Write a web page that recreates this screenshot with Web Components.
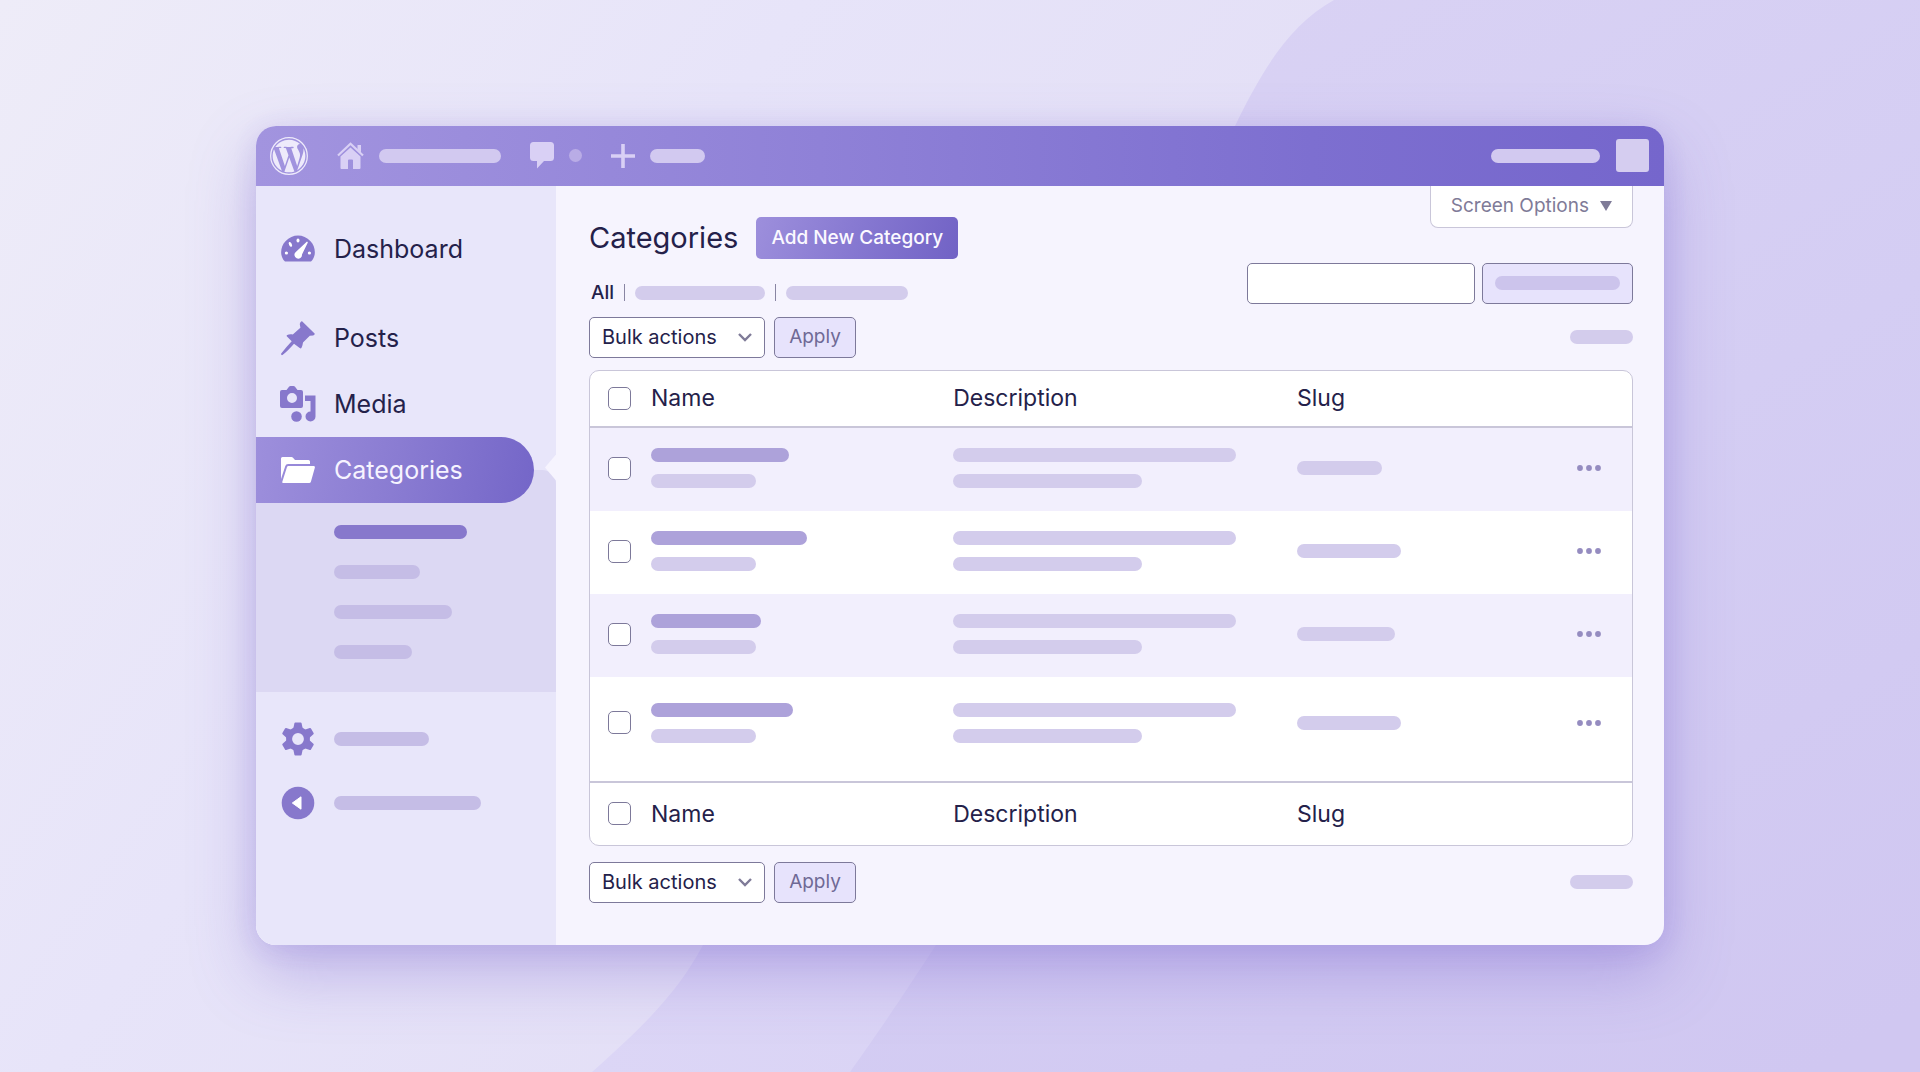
<!DOCTYPE html>
<html lang="en">
<head>
<meta charset="utf-8">
<meta name="viewport" content="width=device-width, initial-scale=1">
<title>Categories</title>
<style>
:root {
    --ink: #24214a;
    --muted: #7f7b98;
    --accent: #8778cc;
    --accent-light: #9d8fdc;
    --accent-dark: #7466c8;
    --border: #7d799a;
    --line: #c9c6d9;
    --bar: #d3ccec;
    --button-bg: #e7e3fc;
}

body {
    margin: 0;
    color: var(--ink);
    font-family: Inter, "Liberation Sans", sans-serif;
    font-size: 20px;
    line-height: 26px;
}
</style>
</head>
<body>
<page-backdrop></page-backdrop>
<admin-window>
  <admin-bar slot="bar"></admin-bar>
  <side-menu slot="menu">
    <menu-item icon="dashboard" spaced>Dashboard</menu-item>
    <menu-item icon="posts">Posts</menu-item>
    <menu-item icon="media">Media</menu-item>
    <menu-item icon="folder" current>Categories</menu-item>
    <sub-menu></sub-menu>
    <menu-item icon="settings" label="Settings" compact><skeleton-bar width="95" tone="soft"></skeleton-bar></menu-item>
    <menu-item icon="collapse" label="Collapse menu" compact><skeleton-bar width="147" tone="soft"></skeleton-bar></menu-item>
  </side-menu>
  <categories-screen></categories-screen>
</admin-window>

<script>
(function() {

  // name: [width, height, shapes]
  const ICONS = {
    logo: [38, 38, `
      <g transform="translate(19 19) scale(1.58)">
        <circle r="11.6" fill="none" stroke="currentColor" stroke-width=".8"/>
        <path transform="scale(.96) translate(-12 -12)" fill="currentColor" d="M21.469 6.825c.84 1.537 1.318 3.3 1.318 5.175 0 3.979-2.156 7.456-5.363 9.325l3.295-9.527c.615-1.54.82-2.771.82-3.864 0-.405-.026-.78-.07-1.11m-7.981.105c.647-.03 1.232-.105 1.232-.105.582-.075.514-.93-.067-.899 0 0-1.755.135-2.88.135-1.064 0-2.85-.15-2.85-.15-.585-.03-.661.855-.075.885 0 0 .54.061 1.125.09l1.68 4.605-2.37 7.08L5.354 6.9c.649-.03 1.234-.1 1.234-.1.585-.075.516-.93-.065-.896 0 0-1.746.138-2.874.138-.2 0-.438-.008-.69-.015C4.911 3.15 8.235 1.215 12 1.215c2.809 0 5.365 1.072 7.286 2.833-.046-.003-.091-.009-.141-.009-1.06 0-1.812.923-1.812 1.914 0 .89.513 1.643 1.06 2.531.411.72.89 1.643.89 2.977 0 .915-.354 1.994-.821 3.479l-1.075 3.585-3.9-11.61zM12 22.784c-1.059 0-2.081-.153-3.048-.437l3.237-9.406 3.315 9.087c.024.053.05.101.078.149-1.12.393-2.325.609-3.582.609M1.211 12c0-1.564.336-3.05.935-4.39L7.29 21.709C3.694 19.96 1.212 16.271 1.211 12"/>
      </g>`],
    home: [27, 27, `
      <path d="M1 13.5 13.5 1.8 26 13.5" fill="none" stroke="currentColor" stroke-width="2.2"/>
      <path fill="currentColor" d="M20.5 3H24v7.5l-3.5-3.3zM3.5 14.6 13.5 5.4l10 9.2V26a1 1 0 0 1-1 1H16v-8.5a1 1 0 0 0-1-1h-3a1 1 0 0 0-1 1V27H4.5a1 1 0 0 1-1-1z"/>`],
    comment: [24, 27, `
      <path fill="currentColor" d="M3.5 0h17A3.5 3.5 0 0 1 24 3.5v12a3.5 3.5 0 0 1-3.500 3.5H14l-7 7.5V19H3.5A3.5 3.5 0 0 1 0 15.5v-12A3.5 3.5 0 0 1 3.5 0z"/>`],
    plus: [24, 24, `<path d="M12 0v24M0 12h24" stroke="currentColor" stroke-width="3.6"/>`],
    dashboard: [34, 27, `
      <path fill="currentColor" d="M4 26.500C-1.600 21.500-.8 11.500 4.500 6.200 11.500-1.300 22.500-1.300 29.500 6.200 34.800 11.500 35.600 21.500 30 26.500z"/>
      <g fill="#fff">
        <circle cx="5.4" cy="18" r="1.6"/><circle cx="28.4" cy="18" r="1.6"/>
        <ellipse cx="17" cy="5.6" rx="1.5" ry="2"/>
        <ellipse cx="9.4" cy="9.4" rx="1.4" ry="2.6" transform="rotate(-26 9.4 9.4)"/>
        <path d="M26 6.5c.8.3 1 .9.6 1.600L21 19.600a3.800 3.800 0 1 1-6.200-2.700z"/>
      </g>`],
    posts: [34, 34, `
      <path fill="currentColor" d="M21.300.4 33.600 12.600c.6.700-.3 1.700-1.400 1.800l-3.400.4-6.800 6.800c-.3 1.800-.6 3.700-1.600 5.400-.5.600-1.200.5-1.700 0L13 22.700C9.500 26.800 5.600 30.700 1.500 34c-.8.500-1.800-.5-1.300-1.400C3.500 28.300 7 24.200 10.700 20.300L6 15.500c-.4-.5-.5-1.200.2-1.600 1.700-.8 3.600-.8 5.600-.5l7.600-6.600-.6-3.500c0-1.300 1.600-3.700 2.500-2.900z"/>`],
    media: [36, 36, `
      <path fill="currentColor" fill-rule="evenodd" d="M2 4h4.500L9 .8A2 2 0 0 1 10.500 0h3A2 2 0 0 1 15 .8L17.500 4H21a2 2 0 0 1 2 2v14a2 2 0 0 1-2 2H2a2 2 0 0 1-2-2V6a2 2 0 0 1 2-2zM12 7a5 5 0 1 0 0 10A5 5 0 0 0 12 7z"/>
      <circle cx="16.5" cy="30.5" r="5.3" fill="currentColor"/>
      <path fill="currentColor" d="M25 9.5h10.500v21a5 5 0 1 1-5-5V15H25z"/>`],
    folder: [34, 26, `
      <path fill="currentColor" d="M0 22V1.500A1.500 1.500 0 0 1 1.500 0h9a2 2 0 0 1 1.500.700l2 2.300h13.500A1.500 1.500 0 0 1 29 4.500V7H7a3 3 0 0 0-2.700 2z"/>
      <path fill="currentColor" d="M7.500 9h25.300a1.200 1.200 0 0 1 1.100 1.500l-4 14.300A1.800 1.800 0 0 1 28.200 26H2.300a1 1 0 0 1-1-1.300L6 10.100A1.600 1.600 0 0 1 7.500 9z"/>`],
    settings: [34, 34, `
      <g transform="translate(17 17)" fill="currentColor">
        <circle r="8.9" fill="none" stroke="currentColor" stroke-width="6"/>
        <path id="tooth" d="M-4.900-9.500-3.600-15.700a1 1 0 0 1 1-.8h5.200a1 1 0 0 1 1 .8L4.900-9.500z"/>
        <use href="#tooth" transform="rotate(60)"/><use href="#tooth" transform="rotate(120)"/>
        <use href="#tooth" transform="rotate(180)"/><use href="#tooth" transform="rotate(240)"/>
        <use href="#tooth" transform="rotate(300)"/>
      </g>`],
    collapse: [34, 34, `
      <circle cx="17" cy="17" r="16.3" fill="currentColor"/>
      <path d="M11.300 17 20 10.800v12.400z" fill="#fff" stroke="#fff" stroke-linejoin="round"/>`],
    chevron: [16, 10, `<path d="M2 2l6 6 6-6" fill="none" stroke="currentColor" stroke-width="2.4"/>`],
    triangle: [12, 10, `<path d="M0 0h12L6 10z" fill="currentColor"/>`],
    dots: [24, 6, `
      <g fill="currentColor"><circle cx="3" cy="3" r="2.9"/><circle cx="12" cy="3" r="2.9"/><circle cx="21" cy="3" r="2.9"/></g>`]
  };

  const TONES = {
    normal: 'var(--bar)',
    soft: '#c5bde6',
    strong: '#ada2da',
    current: 'var(--accent)',
    button: '#ccc4ec',
    onBar: '#d2c9f0'
  };

  const ROWS = [
    { name: 'Category 1', title: 138, slug: 85 },
    { name: 'Category 2', title: 156, slug: 104 },
    { name: 'Category 3', title: 110, slug: 98 },
    { name: 'Category 4', title: 142, slug: 104 }
  ];

  // Base class: renders the markup from html() in an open shadow root
  class BaseElement extends HTMLElement {
    connectedCallback() {
      if (this.shadowRoot) {
        return;
      }
      const template = document.createElement('template');
      template.innerHTML = this.html();
      this.attachShadow({mode: 'open'});
      this.shadowRoot.appendChild(template.content.cloneNode(true));
    }
  }

  class UiIcon extends BaseElement {
    html() {
      const [width, height, shape] = ICONS[this.getAttribute('name')];
      return `
<style>
:host { display: inline-flex; flex: none; }
svg { display: block; overflow: visible; }
</style>
<svg width="${width}" height="${height}" viewBox="0 0 ${width} ${height}" aria-hidden="true">${shape}</svg>`;
    }
  }

  class SkeletonBar extends BaseElement {
    html() {
      return `
<style>
:host {
    display: block;
    flex: none;
    width: ${this.getAttribute('width')}px;
    max-width: 100%;
    height: 14px;
    border-radius: 7px;
    background: ${TONES[this.getAttribute('tone') || 'normal']};
}
</style>`;
    }
  }

  class PageBackdrop extends BaseElement {
    html() {
      return `
<style>
:host { position: fixed; inset: 0; z-index: -1; background: linear-gradient(125deg, #eeecf8 0%, #e7e4f9 30%, #e2ddf5 65%); }
svg { display: block; width: 100%; height: 100%; }
</style>
<svg viewBox="0 0 1920 1072" preserveAspectRatio="none" aria-hidden="true">
  <defs>
    <linearGradient id="wave" x1=".3" y1="0" x2=".9" y2="1">
      <stop offset="0" stop-color="#d9d2f4"/><stop offset=".5" stop-color="#d4cdf3"/><stop offset="1" stop-color="#d0c7f1"/>
    </linearGradient>
    <linearGradient id="low" x1="0" y1="1" x2="1" y2="0">
      <stop offset="0" stop-color="#dcd6f6"/><stop offset="1" stop-color="#d4ccf2"/>
    </linearGradient>
  </defs>
  <path fill="url(#wave)" d="M1334 0C1290 24 1262 70 1235 126 1120 420 1010 640 850 1072H1920V0z"/>
  <path fill="url(#low)" d="M1235 126C1100 500 860 640 703 945 678 992 645 1025 592 1072H850C880 1030 900 1000 936 945L1300 300z"/>
</svg>`;
    }
  }

  class AdminWindow extends BaseElement {
    html() {
      return `
<style>
:host {
    display: grid;
    align-items: center;
    box-sizing: border-box;
    min-height: 100vh;
    padding: 32px 256px 34px;
}
.window {
    overflow: hidden;
    border-radius: 20px;
    background: #f6f4fe;
}
.shadow {
    border-radius: 20px;
    box-shadow: 0 28px 64px rgba(110, 88, 200, 0.34), 0 4px 28px rgba(110, 88, 200, 0.16);
}
.columns {
    display: grid;
    grid-template-columns: 300px minmax(0, 1fr);
}
@media (max-width: 1500px) {
    :host { padding: 32px; }
}
</style>
<div class="shadow">
  <div class="window">
    <slot name="bar"></slot>
    <div class="columns">
      <slot name="menu"></slot>
      <slot></slot>
    </div>
  </div>
</div>`;
    }
  }

  class AdminBar extends BaseElement {
    html() {
      return `
<style>
:host { display: block; }
header {
    display: flex;
    align-items: center;
    justify-content: space-between;
    height: 60px;
    padding: 0 15px 0 14px;
    background: linear-gradient(90deg, #a294df, #8f81d7 40%, #7d6fd0 75%, #7566cc);
    color: #d9d0f5;
}
nav, a {
    display: flex;
    align-items: center;
}
nav { gap: 29px; }
a { gap: 15px; color: inherit; text-decoration: none; }
.logo { color: #eeeafb; }
.count { width: 13px; height: 13px; border-radius: 50%; background: #b9ace6; }
.account { gap: 16px; }
.avatar { width: 33px; height: 33px; border-radius: 3px; background: #d5cdf0; }
</style>
<header>
  <nav aria-label="Toolbar">
    <a class="logo" href="#about" aria-label="About"><ui-icon name="logo"></ui-icon></a>
    <a href="#home" aria-label="Visit site"><ui-icon name="home"></ui-icon><skeleton-bar width="122" tone="onBar"></skeleton-bar></a>
    <a href="#comments" aria-label="Comments"><ui-icon name="comment"></ui-icon><span class="count"></span></a>
    <a href="#new" aria-label="New"><ui-icon name="plus"></ui-icon><skeleton-bar width="55" tone="onBar"></skeleton-bar></a>
  </nav>
  <a class="account" href="#profile" aria-label="Profile"><skeleton-bar width="109" tone="onBar"></skeleton-bar><span class="avatar"></span></a>
</header>`;
    }
  }

  class SideMenu extends BaseElement {
    html() {
      return `
<style>
:host { display: block; background: #e8e6fa; }
nav { padding: 30px 0; }
</style>
<nav aria-label="Main menu"><slot></slot></nav>`;
    }
  }

  class MenuItem extends BaseElement {
    html() {
      const label = this.getAttribute('label');
      return `
<style>
:host { display: block; position: relative; }
:host([spaced]) { margin-bottom: 23px; }
a {
    display: grid;
    grid-template-columns: 34px 1fr;
    align-items: center;
    gap: 19px;
    height: 66px;
    padding-left: 25px;
    color: inherit;
    font-size: 25px;
    line-height: 32px;
    text-decoration: none;
}
ui-icon { justify-content: center; color: var(--accent); }
:host([compact]) a { height: 64px; }
:host([current]) { z-index: 1; }
:host([current]) a {
    margin-right: 22px;
    border-radius: 0 33px 33px 0;
    background: linear-gradient(100deg, var(--accent-light), #8a7cd2 50%, var(--accent-dark));
    color: #f6f3ff;
}
:host([current]) ui-icon { color: #fff; }
/* arrow that points from the content at the current item */
:host([current])::after {
    content: "";
    position: absolute;
    top: 18px;
    right: 0;
    width: 11px;
    height: 26px;
    background: #f6f4fe;
    clip-path: polygon(100% 0, 100% 100%, 0 50%);
}
</style>
<a href="#${this.getAttribute('icon')}" ${label ? `aria-label="${label}"` : ''}>
  <ui-icon name="${this.getAttribute('icon')}"></ui-icon>
  <span><slot></slot></span>
</a>`;
    }
  }

  class SubMenu extends BaseElement {
    html() {
      const items = [['All categories', 133, 'current'], ['Tags', 86, 'soft'], ['Templates', 118, 'soft'], ['Labels', 78, 'soft']];
      return `
<style>
:host { display: block; margin: -33px 0 15px; }
ul {
    display: grid;
    gap: 26px;
    margin: 0;
    padding: 55px 0 33px 78px;
    border-top-right-radius: 14px;
    background: #dcd8f3;
    list-style: none;
}
a { display: block; }
</style>
<ul>
  ${items.map(([label, width, tone]) => `<li><a href="#" aria-label="${label}"><skeleton-bar width="${width}" tone="${tone}"></skeleton-bar></a></li>`).join('')}
</ul>`;
    }
  }

  class BulkActions extends BaseElement {
    html() {
      return `
<style>
:host { display: flex; align-items: center; justify-content: space-between; }
form { display: flex; gap: 9px; }
.select { display: grid; align-items: center; width: 176px; }
.select > * { grid-area: 1 / 1; }
.select ui-icon { justify-self: end; margin-right: 12px; color: var(--muted); pointer-events: none; }
select, button {
    box-sizing: border-box;
    height: 41px;
    border: 1px solid var(--border);
    border-radius: 5px;
    font: inherit;
}
select {
    appearance: none;
    width: 100%;
    padding: 0 32px 0 12px;
    background: #fff;
    color: var(--ink);
}
button {
    width: 82px;
    padding: 0;
    background: var(--button-bg);
    color: #6f6995;
    font-size: 19px;
}
</style>
<form>
  <div class="select">
    <select aria-label="Bulk actions"><option>Bulk actions</option><option>Delete</option></select>
    <ui-icon name="chevron"></ui-icon>
  </div>
  <button type="button">Apply</button>
</form>
<skeleton-bar width="63"></skeleton-bar>`;
    }
  }

  class CategoryTable extends BaseElement {
    html() {
      const heading = `
  <tr>
    <td><input type="checkbox" aria-label="Select all"></td>
    <th scope="col">Name</th>
    <th scope="col">Description</th>
    <th scope="col">Slug</th>
    <td></td>
  </tr>`;
      const row = ({ name, title, slug }) => `
  <tr>
    <td><input type="checkbox" aria-label="Select ${name}"></td>
    <td><div class="lines"><skeleton-bar width="${title}" tone="strong"></skeleton-bar><skeleton-bar width="105"></skeleton-bar></div></td>
    <td><div class="lines"><skeleton-bar width="283"></skeleton-bar><skeleton-bar width="189"></skeleton-bar></div></td>
    <td><skeleton-bar width="${slug}"></skeleton-bar></td>
    <td><button type="button" aria-label="Actions for ${name}"><ui-icon name="dots"></ui-icon></button></td>
  </tr>`;
      return `
<style>
:host {
    display: block;
    overflow: hidden;
    border: 1px solid var(--line);
    border-radius: 10px;
    background: #fff;
}
table { width: 100%; border-spacing: 0; table-layout: fixed; }
.check { width: 61px; }
.name { width: 29%; }
.description { width: 33%; }
.actions { width: 55px; }
th, td { box-sizing: border-box; padding: 0; text-align: left; vertical-align: middle; }
th { font-size: 23px; font-weight: 400; line-height: 28px; }
td:first-child { padding-left: 18px; }
thead td, thead th { height: 57px; border-bottom: 2px solid var(--line); }
tfoot td, tfoot th { height: 64px; border-top: 2px solid var(--line); }
tbody td { height: 83px; padding-bottom: 2px; }
tbody tr:nth-child(odd) { background: #f2effd; }
tbody tr:last-child td { height: 104px; padding-bottom: 12px; }
.lines { display: grid; gap: 12px; }
input {
    appearance: none;
    display: block;
    box-sizing: border-box;
    width: 23px;
    height: 23px;
    margin: 0;
    border: 1px solid var(--border);
    border-radius: 5px;
    background: #fff;
}
input:checked { background: var(--accent); }
button { display: flex; padding: 4px 0; border: 0; background: none; color: #958cc0; }
</style>
<table>
  <colgroup><col class="check"><col class="name"><col class="description"><col><col class="actions"></colgroup>
  <thead>${heading}</thead>
  <tbody>${ROWS.map(row).join('')}</tbody>
  <tfoot>${heading}</tfoot>
</table>`;
    }
  }

  class CategoriesScreen extends BaseElement {
    html() {
      return `
<style>
:host { display: block; }
main { padding: 0 31px 42px 33px; }
.top { display: flex; justify-content: space-between; margin-bottom: 11px; }
.intro { padding-top: 31px; }
.title { display: flex; align-items: center; gap: 18px; height: 42px; margin-bottom: 21px; }
h1 { margin: 0; font-size: 29px; font-weight: 400; line-height: 36px; }
button { padding: 0; font: inherit; font-size: 19px; }
.add {
    height: 42px;
    padding: 0 15px;
    border: 0;
    border-radius: 5px;
    background: linear-gradient(110deg, var(--accent-light), #8678d1 50%, #7162c5);
    color: #fbf9ff;
    font-weight: 500;
}
.filters { display: flex; align-items: center; gap: 10px; padding-left: 2px; }
.filters a { color: inherit; font-size: 19px; font-weight: 500; text-decoration: none; }
.filters i { width: 1px; height: 17px; background: #8985a3; }
.tools { display: flex; flex-direction: column; align-items: flex-end; gap: 35px; }
.screen-options {
    display: flex;
    align-items: center;
    gap: 11px;
    box-sizing: border-box;
    height: 42px;
    padding: 0 20px;
    border: 1px solid var(--line);
    border-top: 0;
    border-radius: 0 0 8px 8px;
    background: #fff;
    color: var(--muted);
}
.search { display: flex; gap: 7px; }
.search input, .search button {
    box-sizing: border-box;
    height: 41px;
    border: 1px solid var(--border);
    border-radius: 5px;
    background: #fff;
}
.search input { width: 228px; padding: 0 12px; font: inherit; }
.search button { padding: 0 12px; background: var(--button-bg); }
category-table { margin: 12px 0 16px; }
</style>
<main>
  <div class="top">
    <div class="intro">
      <div class="title">
        <h1>Categories</h1>
        <button class="add" type="button">Add New Category</button>
      </div>
      <div class="filters">
        <a href="#all">All</a><i></i>
        <a href="#most-used" aria-label="Most used"><skeleton-bar width="130"></skeleton-bar></a><i></i>
        <a href="#empty" aria-label="Empty"><skeleton-bar width="122"></skeleton-bar></a>
      </div>
    </div>
    <div class="tools">
      <button class="screen-options" type="button">Screen Options <ui-icon name="triangle"></ui-icon></button>
      <form class="search">
        <input type="search" aria-label="Search categories">
        <button type="button" aria-label="Search"><skeleton-bar width="125" tone="button"></skeleton-bar></button>
      </form>
    </div>
  </div>
  <bulk-actions></bulk-actions>
  <category-table></category-table>
  <bulk-actions></bulk-actions>
</main>`;
    }
  }

  customElements.define('ui-icon', UiIcon);
  customElements.define('skeleton-bar', SkeletonBar);
  customElements.define('page-backdrop', PageBackdrop);
  customElements.define('admin-window', AdminWindow);
  customElements.define('admin-bar', AdminBar);
  customElements.define('side-menu', SideMenu);
  customElements.define('menu-item', MenuItem);
  customElements.define('sub-menu', SubMenu);
  customElements.define('bulk-actions', BulkActions);
  customElements.define('category-table', CategoryTable);
  customElements.define('categories-screen', CategoriesScreen);

}());
</script>
</body>
</html>
